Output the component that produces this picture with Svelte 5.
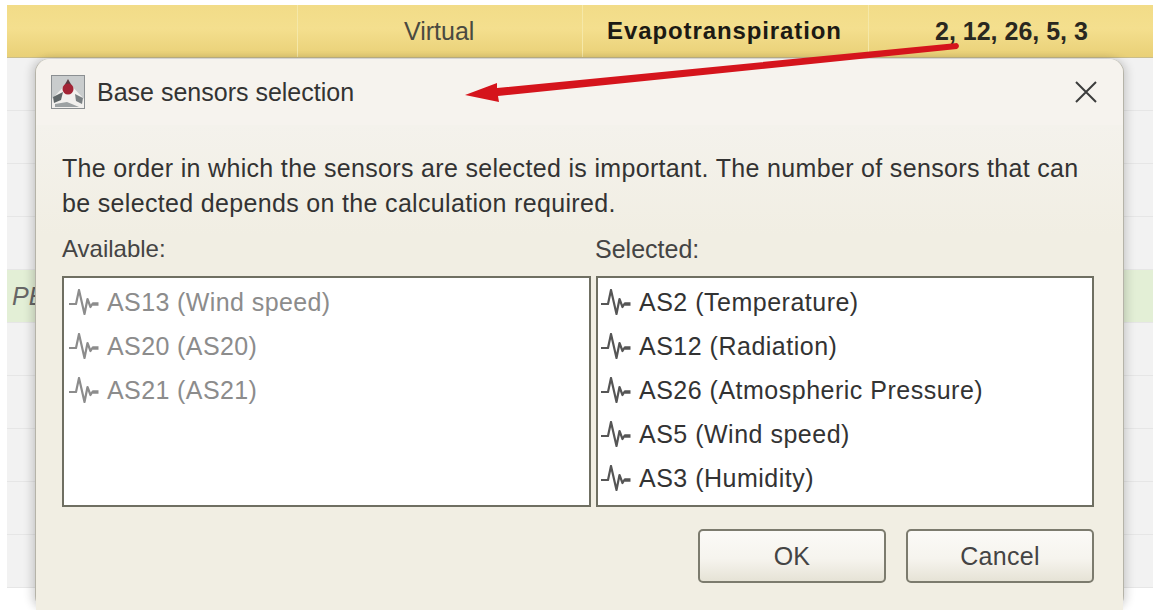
<script lang="ts">
  const available = ['AS13 (Wind speed)', 'AS20 (AS20)', 'AS21 (AS21)'];
  const selected = [
    'AS2 (Temperature)',
    'AS12 (Radiation)',
    'AS26 (Atmospheric Pressure)',
    'AS5 (Wind speed)',
    'AS3 (Humidity)'
  ];
  const rows = [0, 1, 2, 3, 4, 5, 6, 7, 8, 9];
</script>

{#snippet pulse()}
  <svg class="pulse" viewBox="0 0 31 26" width="31" height="26" aria-hidden="true">
    <path d="M1 15H8L11 1L16.500 25L19.500 10L22.500 18L25 14" fill="none" stroke="currentColor" stroke-width="2.200" stroke-linejoin="round" />
    <path d="M24.500 15H30.500" stroke="currentColor" stroke-width="3.500" />
  </svg>
{/snippet}

<div class="page">
  <div class="table">
    <div class="head">
      <div class="cell"></div>
      <div class="cell virtual">Virtual</div>
      <div class="cell name">Evapotranspiration</div>
      <div class="cell ids">2, 12, 26, 5, 3</div>
    </div>
    {#each rows as row}
      <div class="row" class:green={row === 4}>
        {#if row === 4}<span class="clipped">PE</span>{/if}
      </div>
    {/each}
  </div>

  <div class="dialog">
    <div class="titlebar">
      <svg class="app-icon" viewBox="0 0 34 34" width="34" height="34" aria-hidden="true">
        <rect x="0.500" y="0.500" width="33" height="33" fill="#c9cccd" stroke="#8b8f92" />
        <path d="M1 24L17 7L33 24V33H1Z" fill="#f2f0ee" />
        <path d="M2 22L12 17L10 25L3 28Z" fill="#5f6668" />
        <path d="M24 19L32 23L31 29L25 26Z" fill="#7a8083" />
        <path d="M4 29L16 27L28 32H4Z" fill="#9ca1a3" />
        <path d="M17 4L21 11L17 13L13 11Z" fill="#5a3a40" />
        <circle cx="17" cy="14" r="5.500" fill="#a32436" />
      </svg>
      <span class="title">Base sensors selection</span>
      <svg class="close" viewBox="0 0 22 22" width="22" height="22" aria-hidden="true">
        <path d="M1 1L21 21M21 1L1 21" stroke="#3c3c3c" stroke-width="2" />
      </svg>
    </div>

    <div class="body">
      <p class="intro">The order in which the sensors are selected is important. The number of sensors that can be selected depends on the calculation required.</p>
      <div class="lists">
        <div class="col col-left">
          <div class="label">Available:</div>
          <ul class="list disabled">
            {#each available as sensor}
              <li>{@render pulse()}<span>{sensor}</span></li>
            {/each}
          </ul>
        </div>
        <div class="col col-right">
          <div class="label">Selected:</div>
          <ul class="list">
            {#each selected as sensor}
              <li>{@render pulse()}<span>{sensor}</span></li>
            {/each}
          </ul>
        </div>
      </div>
      <div class="actions">
        <button class="btn">OK</button>
        <button class="btn">Cancel</button>
      </div>
    </div>
  </div>

  <svg class="arrow" viewBox="0 0 1161 610" width="1161" height="610" aria-hidden="true">
    <path d="M957 43Q961 46 957 49L498 96L499 102L465 95L497 83L497 88Z" fill="#d5141c" />
  </svg>
</div>

<style>
  :global(body) {
    margin: 0;
    background: #fff;
  }

  .page {
    position: relative;
    width: 1161px;
    height: 610px;
    overflow: hidden;
    box-sizing: border-box;
    padding: 5px 8px 0 7px;
    font-family: "Liberation Sans", Arial, sans-serif;
    color: #333;
  }

  .head {
    display: grid;
    grid-template-columns: 291px 285px 286px 1fr;
    height: 53px;
    background: linear-gradient(#f2dc88, #f4df8e 45%, #e9d077);
    border-bottom: 1px solid #c9bd8c;
    box-sizing: border-box;
    font-size: 25px;
  }

  .cell {
    display: flex;
    align-items: center;
    border-right: 1px solid #f5e8a8;
    color: #222;
  }

  .cell:last-child { border-right: 0; }

  .virtual {
    padding-left: 106px;
    color: #4a4a40;
  }

  .name {
    padding-left: 24px;
    font-size: 24px;
    font-weight: 700;
    letter-spacing: 0.9px;
    color: #1c1a14;
  }

  .ids {
    padding-left: 66px;
    font-weight: 700;
    color: #2a281f;
  }

  .row {
    height: 53px;
    border-bottom: 1px solid #e6e6e6;
    box-sizing: border-box;
    background: #f2f2f2;
  }

  .row.green {
    background: #e3efd6;
    display: flex;
    align-items: center;
  }

  .clipped {
    padding-left: 5px;
    font-style: italic;
    font-size: 25px;
    color: #666;
  }

  .dialog {
    position: absolute;
    left: 35px;
    top: 59px;
    width: 1089px;
    height: 551px;
    box-sizing: border-box;
    border-radius: 14px;
    border-left: 1px solid #b5b3a8;
    border-right: 1px solid #b5b3a8;
    background: #f1eee3;
    box-shadow: -4px 0 8px rgba(0, 0, 0, 0.14), 4px 0 8px rgba(0, 0, 0, 0.12);
    display: flex;
    flex-direction: column;
  }

  .titlebar {
    display: flex;
    align-items: center;
    height: 66px;
    flex-shrink: 0;
    padding: 0 26px 0 15px;
    border-radius: 14px 14px 0 0;
    background: #f6f3ee;
  }

  .app-icon { flex-shrink: 0; }

  .title {
    flex: 1;
    margin-left: 12px;
    font-size: 25px;
    color: #333;
  }

  .close { flex-shrink: 0; }

  .body {
    flex: 1;
    padding: 26px 29px 0 26px;
    background: linear-gradient(#f4f2ec, #f1eee3 110px);
  }

  .intro {
    margin: 0;
    font-size: 25px;
    letter-spacing: 0.33px;
    line-height: 35px;
    color: #333;
  }

  .lists {
    display: flex;
    gap: 5px;
    margin-top: 13px;
  }

  .col-left { width: 529px; }
  .col-right { flex: 1; }

  .label {
    height: 42px;
    line-height: 30px;
    font-size: 24px;
    color: #444;
  }

  .col-right .label {
    margin-left: -1px;
    font-size: 25px;
  }

  .list {
    margin: 0;
    padding: 2px 0 0 2px;
    height: 231px;
    box-sizing: border-box;
    list-style: none;
    background: #fff;
    border: 2px solid #6f6f62;
    color: #333;
    font-size: 25px;
    letter-spacing: 0.5px;
  }

  .list.disabled {
    padding-left: 4px;
    letter-spacing: 0.4px;
  }

  .list li {
    display: flex;
    align-items: center;
    gap: 8px;
    height: 44px;
  }

  .pulse {
    flex-shrink: 0;
    color: #555;
  }

  .disabled,
  .disabled .pulse { color: #8c8c8c; }

  .actions {
    display: flex;
    justify-content: flex-end;
    gap: 20px;
    margin-top: 22px;
  }

  .btn {
    width: 188px;
    height: 54px;
    border: 2px solid #7c7b6e;
    border-radius: 5px;
    background: linear-gradient(#fbfaf7, #f6f4ee 55%, #e6e3d6);
    font: inherit;
    font-size: 25px;
    letter-spacing: 0.3px;
    color: #444;
    padding: 0;
  }

  .arrow {
    position: absolute;
    inset: 0;
    pointer-events: none;
  }
</style>
